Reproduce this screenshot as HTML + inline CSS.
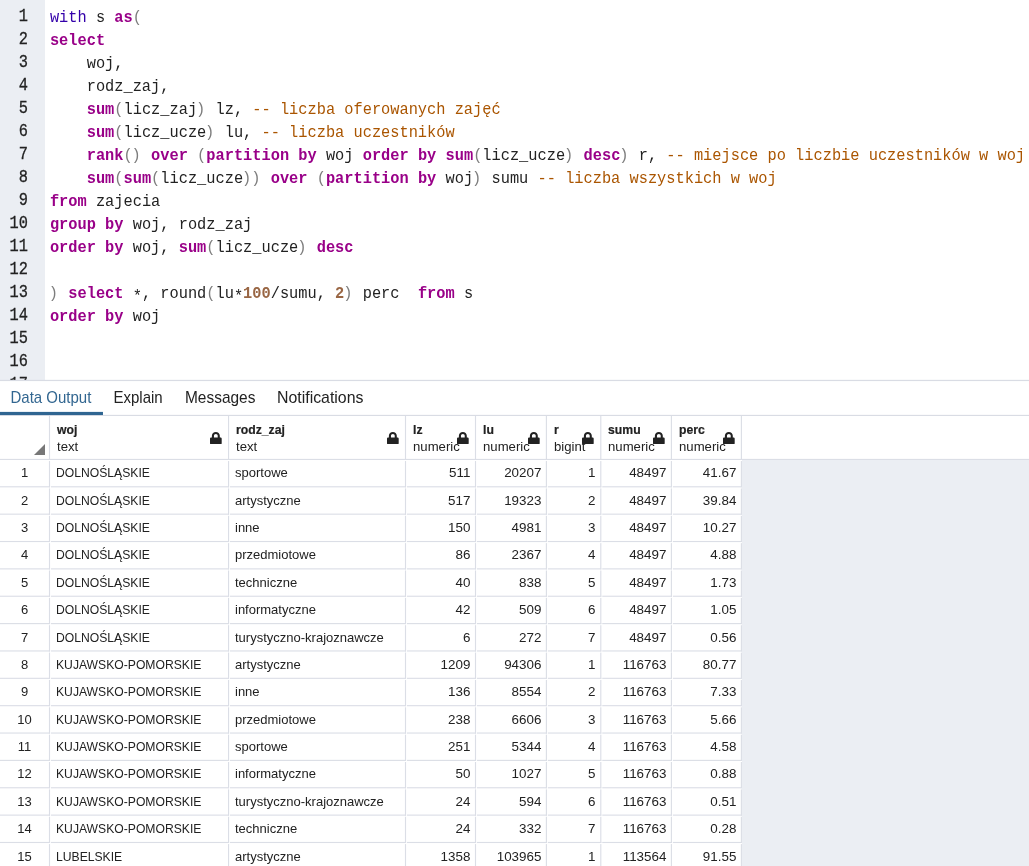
<!DOCTYPE html>
<html lang="en"><head><meta charset="utf-8"><title>pgAdmin query</title>
<style>
html,body{margin:0;padding:0;}
body{width:1029px;height:866px;overflow:hidden;background:#fff;position:relative;font-family:"Liberation Sans",sans-serif;color:#222;}
#ed{position:absolute;left:0;top:0;width:1029px;height:380px;overflow:hidden;background:#fff;}
#gut{position:absolute;left:0;top:0;width:45px;height:380px;background:#ebeef3;}
.ln{position:absolute;left:0;width:28px;text-align:right;font-family:"Liberation Mono",monospace;font-size:15.33px;line-height:23px;height:23px;color:#222;white-space:pre;transform:scaleY(1.2);transform-origin:0 15.590px;-webkit-text-stroke:0.250px #222;}
.cl{position:absolute;left:49.900px;font-family:"Liberation Mono",monospace;font-size:15.33px;line-height:23px;height:23px;color:#222;white-space:pre;transform:scaleY(1.035);transform-origin:0 15.590px;}
.k{color:#990088;font-weight:bold;}
.b{color:#3300aa;}
.p{color:#7d7d7d;}
.c{color:#aa5500;}
.n{color:#996644;font-weight:bold;}
#pl{position:absolute;left:0;top:378px;}
#tabs{position:absolute;left:0;top:381px;width:1029px;height:34px;background:#fff;}
.tab{position:absolute;top:0.400px;height:34px;line-height:34px;font-size:15px;color:#222;white-space:pre;transform-origin:0 21.950px;}
#grid{position:absolute;left:0;top:416px;width:1029px;height:450px;background:#fff;overflow:hidden;}
#gbg{position:absolute;left:742px;top:44px;width:300px;height:420px;background:#ebeef3;}
#lines{position:absolute;left:0;top:0;fill:#dbdee6;}
.hn{position:absolute;font-weight:bold;font-size:13px;line-height:16px;white-space:pre;color:#222;transform:scale(0.94,1.05);transform-origin:0 12.300px;-webkit-text-stroke:0.200px #222;}
.ht{position:absolute;font-size:13px;line-height:16px;white-space:pre;color:#222;transform:scale(1.012,1.04);transform-origin:0 12.300px;}
.lock{position:absolute;width:11.700px;height:12.450px;fill:#222;}
.a{position:relative;top:3px;}
.q{position:relative;left:-1.200px;}
.cell{position:absolute;font-size:13px;line-height:27.430px;height:27.430px;white-space:pre;color:#222;}
.r{text-align:right;transform:scaleX(1.03);transform-origin:100% 0;}
.u{transform:scaleX(0.935);transform-origin:0 0;}
#tri{position:absolute;left:34px;top:28px;width:0;height:0;border-left:11px solid transparent;border-bottom:11px solid #777;}
#w{position:absolute;left:0;top:0;width:1029px;height:866px;overflow:hidden;will-change:transform;background:#fff;}
</style></head><body><div id="w">
<div id="ed"><div id="gut"></div>
<div class="ln" style="top:5.7px">1</div><div class="cl" style="top:7.3px"><span class="b">with</span> s <span class="k">as</span><span class="p">(</span></div>
<div class="ln" style="top:28.7px">2</div><div class="cl" style="top:30.3px"><span class="k">select</span></div>
<div class="ln" style="top:51.7px">3</div><div class="cl" style="top:53.3px">    woj,</div>
<div class="ln" style="top:74.7px">4</div><div class="cl" style="top:76.3px">    rodz_zaj,</div>
<div class="ln" style="top:97.7px">5</div><div class="cl" style="top:99.3px">    <span class="k">sum</span><span class="p">(</span>licz_zaj<span class="p"><span class="q">)</span></span> lz, <span class="c">-- liczba oferowanych zajęć</span></div>
<div class="ln" style="top:120.7px">6</div><div class="cl" style="top:122.3px">    <span class="k">sum</span><span class="p">(</span>licz_ucze<span class="p"><span class="q">)</span></span> lu, <span class="c">-- liczba uczestników</span></div>
<div class="ln" style="top:143.7px">7</div><div class="cl" style="top:145.3px">    <span class="k">rank</span><span class="p">(<span class="q">)</span></span> <span class="k">over</span> <span class="p">(</span><span class="k">partition</span> <span class="k">by</span> woj <span class="k">order</span> <span class="k">by</span> <span class="k">sum</span><span class="p">(</span>licz_ucze<span class="p"><span class="q">)</span></span> <span class="k">desc</span><span class="p"><span class="q">)</span></span> r, <span class="c">-- miejsce po liczbie uczestników w woj</span></div>
<div class="ln" style="top:166.7px">8</div><div class="cl" style="top:168.3px">    <span class="k">sum</span><span class="p">(</span><span class="k">sum</span><span class="p">(</span>licz_ucze<span class="p"><span class="q">)</span><span class="q">)</span></span> <span class="k">over</span> <span class="p">(</span><span class="k">partition</span> <span class="k">by</span> woj<span class="p"><span class="q">)</span></span> sumu <span class="c">-- liczba wszystkich w woj</span></div>
<div class="ln" style="top:189.7px">9</div><div class="cl" style="top:191.3px"><span class="k">from</span> zajecia</div>
<div class="ln" style="top:212.7px">10</div><div class="cl" style="top:214.3px"><span class="k">group</span> <span class="k">by</span> woj, rodz_zaj</div>
<div class="ln" style="top:235.7px">11</div><div class="cl" style="top:237.3px"><span class="k">order</span> <span class="k">by</span> woj, <span class="k">sum</span><span class="p">(</span>licz_ucze<span class="p"><span class="q">)</span></span> <span class="k">desc</span></div>
<div class="ln" style="top:258.7px">12</div><div class="cl" style="top:260.3px"></div>
<div class="ln" style="top:281.7px">13</div><div class="cl" style="top:283.3px"><span class="p"><span class="q">)</span></span> <span class="k">select</span> <span class="a">*</span>, round<span class="p">(</span>lu<span class="a">*</span><span class="n">100</span>/sumu, <span class="n">2</span><span class="p"><span class="q">)</span></span> perc  <span class="k">from</span> s</div>
<div class="ln" style="top:304.7px">14</div><div class="cl" style="top:306.3px"><span class="k">order</span> <span class="k">by</span> woj</div>
<div class="ln" style="top:327.7px">15</div><div class="cl" style="top:329.3px"></div>
<div class="ln" style="top:350.7px">16</div><div class="cl" style="top:352.3px"></div>
<div class="ln" style="top:373.7px">17</div><div class="cl" style="top:375.3px"></div>
</div>
<div id="tabs"><div class="tab" style="left:10.5px;color:#326690;transform:scale(1.0,1.06)">Data Output</div><div class="tab" style="left:113.5px;color:#222;transform:scale(1.0,1.06)">Explain</div><div class="tab" style="left:184.5px;color:#222;transform:scale(1.03,1.06)">Messages</div><div class="tab" style="left:276.5px;color:#222;transform:scale(1.058,1.06)">Notifications</div></div>
<svg id="pl" width="1029" height="40" viewBox="0 378 1029 40"><rect x="0" y="379.84" width="1029" height="1.24" fill="#d9dce4"/><rect x="0" y="414.85" width="1029" height="1.24" fill="#d9dce4"/><rect x="0" y="411.9" width="102.97" height="3.14" fill="#2f6591"/></svg>
<div id="grid"><div id="gbg"></div><div id="tri"></div>
<div class="hn" style="left:56.7px;top:6.200px">woj</div><div class="ht" style="left:56.6px;top:23.100px">text</div><svg class="lock" style="left:210.3px;top:15.650px" viewBox="0 0 448 512" preserveAspectRatio="none"><path d="M400 224h-24v-72C376 68.200 307.800 0 224 0S72 68.200 72 152v72H48c-26.500 0-48 21.500-48 48v192c0 26.500 21.500 48 48 48h352c26.500 0 48-21.500 48-48V272c0-26.500-21.500-48-48-48zm-104 0H152v-72c0-39.700 32.300-72 72-72s72 32.300 72 72v72z"/></svg>
<div class="hn" style="left:235.7px;top:6.200px">rodz_zaj</div><div class="ht" style="left:235.6px;top:23.100px">text</div><svg class="lock" style="left:387.3px;top:15.650px" viewBox="0 0 448 512" preserveAspectRatio="none"><path d="M400 224h-24v-72C376 68.200 307.800 0 224 0S72 68.200 72 152v72H48c-26.500 0-48 21.500-48 48v192c0 26.500 21.500 48 48 48h352c26.500 0 48-21.500 48-48V272c0-26.500-21.500-48-48-48zm-104 0H152v-72c0-39.700 32.300-72 72-72s72 32.300 72 72v72z"/></svg>
<div class="hn" style="left:412.7px;top:6.200px">lz</div><div class="ht" style="left:412.6px;top:23.100px">numeric</div><svg class="lock" style="left:457.3px;top:15.650px" viewBox="0 0 448 512" preserveAspectRatio="none"><path d="M400 224h-24v-72C376 68.200 307.800 0 224 0S72 68.200 72 152v72H48c-26.500 0-48 21.500-48 48v192c0 26.500 21.500 48 48 48h352c26.500 0 48-21.500 48-48V272c0-26.500-21.500-48-48-48zm-104 0H152v-72c0-39.700 32.300-72 72-72s72 32.300 72 72v72z"/></svg>
<div class="hn" style="left:482.7px;top:6.200px">lu</div><div class="ht" style="left:482.6px;top:23.100px">numeric</div><svg class="lock" style="left:528.3px;top:15.650px" viewBox="0 0 448 512" preserveAspectRatio="none"><path d="M400 224h-24v-72C376 68.200 307.800 0 224 0S72 68.200 72 152v72H48c-26.500 0-48 21.500-48 48v192c0 26.500 21.500 48 48 48h352c26.500 0 48-21.500 48-48V272c0-26.500-21.500-48-48-48zm-104 0H152v-72c0-39.700 32.300-72 72-72s72 32.300 72 72v72z"/></svg>
<div class="hn" style="left:553.7px;top:6.200px">r</div><div class="ht" style="left:553.6px;top:23.100px">bigint</div><svg class="lock" style="left:582.3px;top:15.650px" viewBox="0 0 448 512" preserveAspectRatio="none"><path d="M400 224h-24v-72C376 68.200 307.800 0 224 0S72 68.200 72 152v72H48c-26.500 0-48 21.500-48 48v192c0 26.500 21.500 48 48 48h352c26.500 0 48-21.500 48-48V272c0-26.500-21.500-48-48-48zm-104 0H152v-72c0-39.700 32.300-72 72-72s72 32.300 72 72v72z"/></svg>
<div class="hn" style="left:607.7px;top:6.200px">sumu</div><div class="ht" style="left:607.6px;top:23.100px">numeric</div><svg class="lock" style="left:653.3px;top:15.650px" viewBox="0 0 448 512" preserveAspectRatio="none"><path d="M400 224h-24v-72C376 68.200 307.800 0 224 0S72 68.200 72 152v72H48c-26.500 0-48 21.500-48 48v192c0 26.500 21.500 48 48 48h352c26.500 0 48-21.500 48-48V272c0-26.500-21.500-48-48-48zm-104 0H152v-72c0-39.700 32.300-72 72-72s72 32.300 72 72v72z"/></svg>
<div class="hn" style="left:678.7px;top:6.200px">perc</div><div class="ht" style="left:678.6px;top:23.100px">numeric</div><svg class="lock" style="left:723.3px;top:15.650px" viewBox="0 0 448 512" preserveAspectRatio="none"><path d="M400 224h-24v-72C376 68.200 307.800 0 224 0S72 68.200 72 152v72H48c-26.500 0-48 21.500-48 48v192c0 26.500 21.500 48 48 48h352c26.500 0 48-21.500 48-48V272c0-26.500-21.500-48-48-48zm-104 0H152v-72c0-39.700 32.300-72 72-72s72 32.300 72 72v72z"/></svg>
<svg id="lines" width="1029" height="450" viewBox="0 0 1029 450"><rect x="48.94" y="0" width="1.12" height="44.00"/><rect x="227.99" y="0" width="1.12" height="44.00"/><rect x="404.94" y="0" width="1.12" height="44.00"/><rect x="474.94" y="0" width="1.12" height="44.00"/><rect x="545.84" y="0" width="1.12" height="44.00"/><rect x="600.24" y="0" width="1.12" height="44.00"/><rect x="670.84" y="0" width="1.12" height="44.00"/><rect x="740.84" y="0" width="1.12" height="44.00"/><rect x="0" y="42.88" width="1029" height="1.12"/><rect x="0.00" y="70.24" width="50.06" height="1.12"/><rect x="50.95" y="70.24" width="178.16" height="1.12"/><rect x="230.00" y="70.24" width="176.06" height="1.12"/><rect x="406.95" y="70.24" width="69.11" height="1.12"/><rect x="476.95" y="70.24" width="70.01" height="1.12"/><rect x="547.85" y="70.24" width="53.51" height="1.12"/><rect x="602.25" y="70.24" width="69.71" height="1.12"/><rect x="672.85" y="70.24" width="69.11" height="1.12"/><rect x="0.00" y="97.60" width="50.06" height="1.12"/><rect x="50.95" y="97.60" width="178.16" height="1.12"/><rect x="230.00" y="97.60" width="176.06" height="1.12"/><rect x="406.95" y="97.60" width="69.11" height="1.12"/><rect x="476.95" y="97.60" width="70.01" height="1.12"/><rect x="547.85" y="97.60" width="53.51" height="1.12"/><rect x="602.25" y="97.60" width="69.71" height="1.12"/><rect x="672.85" y="97.60" width="69.11" height="1.12"/><rect x="0.00" y="124.96" width="50.06" height="1.12"/><rect x="50.95" y="124.96" width="178.16" height="1.12"/><rect x="230.00" y="124.96" width="176.06" height="1.12"/><rect x="406.95" y="124.96" width="69.11" height="1.12"/><rect x="476.95" y="124.96" width="70.01" height="1.12"/><rect x="547.85" y="124.96" width="53.51" height="1.12"/><rect x="602.25" y="124.96" width="69.71" height="1.12"/><rect x="672.85" y="124.96" width="69.11" height="1.12"/><rect x="0.00" y="152.32" width="50.06" height="1.12"/><rect x="50.95" y="152.32" width="178.16" height="1.12"/><rect x="230.00" y="152.32" width="176.06" height="1.12"/><rect x="406.95" y="152.32" width="69.11" height="1.12"/><rect x="476.95" y="152.32" width="70.01" height="1.12"/><rect x="547.85" y="152.32" width="53.51" height="1.12"/><rect x="602.25" y="152.32" width="69.71" height="1.12"/><rect x="672.85" y="152.32" width="69.11" height="1.12"/><rect x="0.00" y="179.68" width="50.06" height="1.12"/><rect x="50.95" y="179.68" width="178.16" height="1.12"/><rect x="230.00" y="179.68" width="176.06" height="1.12"/><rect x="406.95" y="179.68" width="69.11" height="1.12"/><rect x="476.95" y="179.68" width="70.01" height="1.12"/><rect x="547.85" y="179.68" width="53.51" height="1.12"/><rect x="602.25" y="179.68" width="69.71" height="1.12"/><rect x="672.85" y="179.68" width="69.11" height="1.12"/><rect x="0.00" y="207.04" width="50.06" height="1.12"/><rect x="50.95" y="207.04" width="178.16" height="1.12"/><rect x="230.00" y="207.04" width="176.06" height="1.12"/><rect x="406.95" y="207.04" width="69.11" height="1.12"/><rect x="476.95" y="207.04" width="70.01" height="1.12"/><rect x="547.85" y="207.04" width="53.51" height="1.12"/><rect x="602.25" y="207.04" width="69.71" height="1.12"/><rect x="672.85" y="207.04" width="69.11" height="1.12"/><rect x="0.00" y="234.40" width="50.06" height="1.12"/><rect x="50.95" y="234.40" width="178.16" height="1.12"/><rect x="230.00" y="234.40" width="176.06" height="1.12"/><rect x="406.95" y="234.40" width="69.11" height="1.12"/><rect x="476.95" y="234.40" width="70.01" height="1.12"/><rect x="547.85" y="234.40" width="53.51" height="1.12"/><rect x="602.25" y="234.40" width="69.71" height="1.12"/><rect x="672.85" y="234.40" width="69.11" height="1.12"/><rect x="0.00" y="261.76" width="50.06" height="1.12"/><rect x="50.95" y="261.76" width="178.16" height="1.12"/><rect x="230.00" y="261.76" width="176.06" height="1.12"/><rect x="406.95" y="261.76" width="69.11" height="1.12"/><rect x="476.95" y="261.76" width="70.01" height="1.12"/><rect x="547.85" y="261.76" width="53.51" height="1.12"/><rect x="602.25" y="261.76" width="69.71" height="1.12"/><rect x="672.85" y="261.76" width="69.11" height="1.12"/><rect x="0.00" y="289.12" width="50.06" height="1.12"/><rect x="50.95" y="289.12" width="178.16" height="1.12"/><rect x="230.00" y="289.12" width="176.06" height="1.12"/><rect x="406.95" y="289.12" width="69.11" height="1.12"/><rect x="476.95" y="289.12" width="70.01" height="1.12"/><rect x="547.85" y="289.12" width="53.51" height="1.12"/><rect x="602.25" y="289.12" width="69.71" height="1.12"/><rect x="672.85" y="289.12" width="69.11" height="1.12"/><rect x="0.00" y="316.48" width="50.06" height="1.12"/><rect x="50.95" y="316.48" width="178.16" height="1.12"/><rect x="230.00" y="316.48" width="176.06" height="1.12"/><rect x="406.95" y="316.48" width="69.11" height="1.12"/><rect x="476.95" y="316.48" width="70.01" height="1.12"/><rect x="547.85" y="316.48" width="53.51" height="1.12"/><rect x="602.25" y="316.48" width="69.71" height="1.12"/><rect x="672.85" y="316.48" width="69.11" height="1.12"/><rect x="0.00" y="343.84" width="50.06" height="1.12"/><rect x="50.95" y="343.84" width="178.16" height="1.12"/><rect x="230.00" y="343.84" width="176.06" height="1.12"/><rect x="406.95" y="343.84" width="69.11" height="1.12"/><rect x="476.95" y="343.84" width="70.01" height="1.12"/><rect x="547.85" y="343.84" width="53.51" height="1.12"/><rect x="602.25" y="343.84" width="69.71" height="1.12"/><rect x="672.85" y="343.84" width="69.11" height="1.12"/><rect x="0.00" y="371.20" width="50.06" height="1.12"/><rect x="50.95" y="371.20" width="178.16" height="1.12"/><rect x="230.00" y="371.20" width="176.06" height="1.12"/><rect x="406.95" y="371.20" width="69.11" height="1.12"/><rect x="476.95" y="371.20" width="70.01" height="1.12"/><rect x="547.85" y="371.20" width="53.51" height="1.12"/><rect x="602.25" y="371.20" width="69.71" height="1.12"/><rect x="672.85" y="371.20" width="69.11" height="1.12"/><rect x="0.00" y="398.56" width="50.06" height="1.12"/><rect x="50.95" y="398.56" width="178.16" height="1.12"/><rect x="230.00" y="398.56" width="176.06" height="1.12"/><rect x="406.95" y="398.56" width="69.11" height="1.12"/><rect x="476.95" y="398.56" width="70.01" height="1.12"/><rect x="547.85" y="398.56" width="53.51" height="1.12"/><rect x="602.25" y="398.56" width="69.71" height="1.12"/><rect x="672.85" y="398.56" width="69.11" height="1.12"/><rect x="0.00" y="425.92" width="50.06" height="1.12"/><rect x="50.95" y="425.92" width="178.16" height="1.12"/><rect x="230.00" y="425.92" width="176.06" height="1.12"/><rect x="406.95" y="425.92" width="69.11" height="1.12"/><rect x="476.95" y="425.92" width="70.01" height="1.12"/><rect x="547.85" y="425.92" width="53.51" height="1.12"/><rect x="602.25" y="425.92" width="69.71" height="1.12"/><rect x="672.85" y="425.92" width="69.11" height="1.12"/><rect x="0.00" y="453.28" width="50.06" height="1.12"/><rect x="50.95" y="453.28" width="178.16" height="1.12"/><rect x="230.00" y="453.28" width="176.06" height="1.12"/><rect x="406.95" y="453.28" width="69.11" height="1.12"/><rect x="476.95" y="453.28" width="70.01" height="1.12"/><rect x="547.85" y="453.28" width="53.51" height="1.12"/><rect x="602.25" y="453.28" width="69.71" height="1.12"/><rect x="672.85" y="453.28" width="69.11" height="1.12"/><rect x="48.94" y="45.04" width="1.12" height="26.32"/><rect x="227.99" y="45.04" width="1.12" height="26.32"/><rect x="404.94" y="45.04" width="1.12" height="26.32"/><rect x="474.94" y="45.04" width="1.12" height="26.32"/><rect x="545.84" y="45.04" width="1.12" height="26.32"/><rect x="600.24" y="45.04" width="1.12" height="26.32"/><rect x="670.84" y="45.04" width="1.12" height="26.32"/><rect x="740.84" y="45.04" width="1.12" height="26.32"/><rect x="48.94" y="72.40" width="1.12" height="26.32"/><rect x="227.99" y="72.40" width="1.12" height="26.32"/><rect x="404.94" y="72.40" width="1.12" height="26.32"/><rect x="474.94" y="72.40" width="1.12" height="26.32"/><rect x="545.84" y="72.40" width="1.12" height="26.32"/><rect x="600.24" y="72.40" width="1.12" height="26.32"/><rect x="670.84" y="72.40" width="1.12" height="26.32"/><rect x="740.84" y="72.40" width="1.12" height="26.32"/><rect x="48.94" y="99.76" width="1.12" height="26.32"/><rect x="227.99" y="99.76" width="1.12" height="26.32"/><rect x="404.94" y="99.76" width="1.12" height="26.32"/><rect x="474.94" y="99.76" width="1.12" height="26.32"/><rect x="545.84" y="99.76" width="1.12" height="26.32"/><rect x="600.24" y="99.76" width="1.12" height="26.32"/><rect x="670.84" y="99.76" width="1.12" height="26.32"/><rect x="740.84" y="99.76" width="1.12" height="26.32"/><rect x="48.94" y="127.12" width="1.12" height="26.32"/><rect x="227.99" y="127.12" width="1.12" height="26.32"/><rect x="404.94" y="127.12" width="1.12" height="26.32"/><rect x="474.94" y="127.12" width="1.12" height="26.32"/><rect x="545.84" y="127.12" width="1.12" height="26.32"/><rect x="600.24" y="127.12" width="1.12" height="26.32"/><rect x="670.84" y="127.12" width="1.12" height="26.32"/><rect x="740.84" y="127.12" width="1.12" height="26.32"/><rect x="48.94" y="154.48" width="1.12" height="26.32"/><rect x="227.99" y="154.48" width="1.12" height="26.32"/><rect x="404.94" y="154.48" width="1.12" height="26.32"/><rect x="474.94" y="154.48" width="1.12" height="26.32"/><rect x="545.84" y="154.48" width="1.12" height="26.32"/><rect x="600.24" y="154.48" width="1.12" height="26.32"/><rect x="670.84" y="154.48" width="1.12" height="26.32"/><rect x="740.84" y="154.48" width="1.12" height="26.32"/><rect x="48.94" y="181.84" width="1.12" height="26.32"/><rect x="227.99" y="181.84" width="1.12" height="26.32"/><rect x="404.94" y="181.84" width="1.12" height="26.32"/><rect x="474.94" y="181.84" width="1.12" height="26.32"/><rect x="545.84" y="181.84" width="1.12" height="26.32"/><rect x="600.24" y="181.84" width="1.12" height="26.32"/><rect x="670.84" y="181.84" width="1.12" height="26.32"/><rect x="740.84" y="181.84" width="1.12" height="26.32"/><rect x="48.94" y="209.20" width="1.12" height="26.32"/><rect x="227.99" y="209.20" width="1.12" height="26.32"/><rect x="404.94" y="209.20" width="1.12" height="26.32"/><rect x="474.94" y="209.20" width="1.12" height="26.32"/><rect x="545.84" y="209.20" width="1.12" height="26.32"/><rect x="600.24" y="209.20" width="1.12" height="26.32"/><rect x="670.84" y="209.20" width="1.12" height="26.32"/><rect x="740.84" y="209.20" width="1.12" height="26.32"/><rect x="48.94" y="236.56" width="1.12" height="26.32"/><rect x="227.99" y="236.56" width="1.12" height="26.32"/><rect x="404.94" y="236.56" width="1.12" height="26.32"/><rect x="474.94" y="236.56" width="1.12" height="26.32"/><rect x="545.84" y="236.56" width="1.12" height="26.32"/><rect x="600.24" y="236.56" width="1.12" height="26.32"/><rect x="670.84" y="236.56" width="1.12" height="26.32"/><rect x="740.84" y="236.56" width="1.12" height="26.32"/><rect x="48.94" y="263.92" width="1.12" height="26.32"/><rect x="227.99" y="263.92" width="1.12" height="26.32"/><rect x="404.94" y="263.92" width="1.12" height="26.32"/><rect x="474.94" y="263.92" width="1.12" height="26.32"/><rect x="545.84" y="263.92" width="1.12" height="26.32"/><rect x="600.24" y="263.92" width="1.12" height="26.32"/><rect x="670.84" y="263.92" width="1.12" height="26.32"/><rect x="740.84" y="263.92" width="1.12" height="26.32"/><rect x="48.94" y="291.28" width="1.12" height="26.32"/><rect x="227.99" y="291.28" width="1.12" height="26.32"/><rect x="404.94" y="291.28" width="1.12" height="26.32"/><rect x="474.94" y="291.28" width="1.12" height="26.32"/><rect x="545.84" y="291.28" width="1.12" height="26.32"/><rect x="600.24" y="291.28" width="1.12" height="26.32"/><rect x="670.84" y="291.28" width="1.12" height="26.32"/><rect x="740.84" y="291.28" width="1.12" height="26.32"/><rect x="48.94" y="318.64" width="1.12" height="26.32"/><rect x="227.99" y="318.64" width="1.12" height="26.32"/><rect x="404.94" y="318.64" width="1.12" height="26.32"/><rect x="474.94" y="318.64" width="1.12" height="26.32"/><rect x="545.84" y="318.64" width="1.12" height="26.32"/><rect x="600.24" y="318.64" width="1.12" height="26.32"/><rect x="670.84" y="318.64" width="1.12" height="26.32"/><rect x="740.84" y="318.64" width="1.12" height="26.32"/><rect x="48.94" y="346.00" width="1.12" height="26.32"/><rect x="227.99" y="346.00" width="1.12" height="26.32"/><rect x="404.94" y="346.00" width="1.12" height="26.32"/><rect x="474.94" y="346.00" width="1.12" height="26.32"/><rect x="545.84" y="346.00" width="1.12" height="26.32"/><rect x="600.24" y="346.00" width="1.12" height="26.32"/><rect x="670.84" y="346.00" width="1.12" height="26.32"/><rect x="740.84" y="346.00" width="1.12" height="26.32"/><rect x="48.94" y="373.36" width="1.12" height="26.32"/><rect x="227.99" y="373.36" width="1.12" height="26.32"/><rect x="404.94" y="373.36" width="1.12" height="26.32"/><rect x="474.94" y="373.36" width="1.12" height="26.32"/><rect x="545.84" y="373.36" width="1.12" height="26.32"/><rect x="600.24" y="373.36" width="1.12" height="26.32"/><rect x="670.84" y="373.36" width="1.12" height="26.32"/><rect x="740.84" y="373.36" width="1.12" height="26.32"/><rect x="48.94" y="400.72" width="1.12" height="26.32"/><rect x="227.99" y="400.72" width="1.12" height="26.32"/><rect x="404.94" y="400.72" width="1.12" height="26.32"/><rect x="474.94" y="400.72" width="1.12" height="26.32"/><rect x="545.84" y="400.72" width="1.12" height="26.32"/><rect x="600.24" y="400.72" width="1.12" height="26.32"/><rect x="670.84" y="400.72" width="1.12" height="26.32"/><rect x="740.84" y="400.72" width="1.12" height="26.32"/><rect x="48.94" y="428.08" width="1.12" height="26.32"/><rect x="227.99" y="428.08" width="1.12" height="26.32"/><rect x="404.94" y="428.08" width="1.12" height="26.32"/><rect x="474.94" y="428.08" width="1.12" height="26.32"/><rect x="545.84" y="428.08" width="1.12" height="26.32"/><rect x="600.24" y="428.08" width="1.12" height="26.32"/><rect x="670.84" y="428.08" width="1.12" height="26.32"/><rect x="740.84" y="428.08" width="1.12" height="26.32"/></svg>
<div class="cell" style="left:0;width:49px;text-align:center;top:43.00px">1</div><div class="cell u" style="left:56px;top:43.00px">DOLNOŚLĄSKIE</div><div class="cell" style="left:235px;top:43.00px">sportowe</div><div class="cell r" style="left:405px;width:65.4px;top:43.00px">511</div><div class="cell r" style="left:475px;width:66.4px;top:43.00px">20207</div><div class="cell r" style="left:546px;width:49.4px;top:43.00px">1</div><div class="cell r" style="left:600px;width:66.4px;top:43.00px">48497</div><div class="cell r" style="left:671px;width:65.4px;top:43.00px">41.67</div>
<div class="cell" style="left:0;width:49px;text-align:center;top:71.03px">2</div><div class="cell u" style="left:56px;top:71.03px">DOLNOŚLĄSKIE</div><div class="cell" style="left:235px;top:71.03px">artystyczne</div><div class="cell r" style="left:405px;width:65.4px;top:71.03px">517</div><div class="cell r" style="left:475px;width:66.4px;top:71.03px">19323</div><div class="cell r" style="left:546px;width:49.4px;top:71.03px">2</div><div class="cell r" style="left:600px;width:66.4px;top:71.03px">48497</div><div class="cell r" style="left:671px;width:65.4px;top:71.03px">39.84</div>
<div class="cell" style="left:0;width:49px;text-align:center;top:97.86px">3</div><div class="cell u" style="left:56px;top:97.86px">DOLNOŚLĄSKIE</div><div class="cell" style="left:235px;top:97.86px">inne</div><div class="cell r" style="left:405px;width:65.4px;top:97.86px">150</div><div class="cell r" style="left:475px;width:66.4px;top:97.86px">4981</div><div class="cell r" style="left:546px;width:49.4px;top:97.86px">3</div><div class="cell r" style="left:600px;width:66.4px;top:97.86px">48497</div><div class="cell r" style="left:671px;width:65.4px;top:97.86px">10.27</div>
<div class="cell" style="left:0;width:49px;text-align:center;top:125.29px">4</div><div class="cell u" style="left:56px;top:125.29px">DOLNOŚLĄSKIE</div><div class="cell" style="left:235px;top:125.29px">przedmiotowe</div><div class="cell r" style="left:405px;width:65.4px;top:125.29px">86</div><div class="cell r" style="left:475px;width:66.4px;top:125.29px">2367</div><div class="cell r" style="left:546px;width:49.4px;top:125.29px">4</div><div class="cell r" style="left:600px;width:66.4px;top:125.29px">48497</div><div class="cell r" style="left:671px;width:65.4px;top:125.29px">4.88</div>
<div class="cell" style="left:0;width:49px;text-align:center;top:152.72px">5</div><div class="cell u" style="left:56px;top:152.72px">DOLNOŚLĄSKIE</div><div class="cell" style="left:235px;top:152.72px">techniczne</div><div class="cell r" style="left:405px;width:65.4px;top:152.72px">40</div><div class="cell r" style="left:475px;width:66.4px;top:152.72px">838</div><div class="cell r" style="left:546px;width:49.4px;top:152.72px">5</div><div class="cell r" style="left:600px;width:66.4px;top:152.72px">48497</div><div class="cell r" style="left:671px;width:65.4px;top:152.72px">1.73</div>
<div class="cell" style="left:0;width:49px;text-align:center;top:180.15px">6</div><div class="cell u" style="left:56px;top:180.15px">DOLNOŚLĄSKIE</div><div class="cell" style="left:235px;top:180.15px">informatyczne</div><div class="cell r" style="left:405px;width:65.4px;top:180.15px">42</div><div class="cell r" style="left:475px;width:66.4px;top:180.15px">509</div><div class="cell r" style="left:546px;width:49.4px;top:180.15px">6</div><div class="cell r" style="left:600px;width:66.4px;top:180.15px">48497</div><div class="cell r" style="left:671px;width:65.4px;top:180.15px">1.05</div>
<div class="cell" style="left:0;width:49px;text-align:center;top:207.58px">7</div><div class="cell u" style="left:56px;top:207.58px">DOLNOŚLĄSKIE</div><div class="cell" style="left:235px;top:207.58px">turystyczno-krajoznawcze</div><div class="cell r" style="left:405px;width:65.4px;top:207.58px">6</div><div class="cell r" style="left:475px;width:66.4px;top:207.58px">272</div><div class="cell r" style="left:546px;width:49.4px;top:207.58px">7</div><div class="cell r" style="left:600px;width:66.4px;top:207.58px">48497</div><div class="cell r" style="left:671px;width:65.4px;top:207.58px">0.56</div>
<div class="cell" style="left:0;width:49px;text-align:center;top:235.01px">8</div><div class="cell u" style="left:56px;top:235.01px">KUJAWSKO-POMORSKIE</div><div class="cell" style="left:235px;top:235.01px">artystyczne</div><div class="cell r" style="left:405px;width:65.4px;top:235.01px">1209</div><div class="cell r" style="left:475px;width:66.4px;top:235.01px">94306</div><div class="cell r" style="left:546px;width:49.4px;top:235.01px">1</div><div class="cell r" style="left:600px;width:66.4px;top:235.01px">116763</div><div class="cell r" style="left:671px;width:65.4px;top:235.01px">80.77</div>
<div class="cell" style="left:0;width:49px;text-align:center;top:262.44px">9</div><div class="cell u" style="left:56px;top:262.44px">KUJAWSKO-POMORSKIE</div><div class="cell" style="left:235px;top:262.44px">inne</div><div class="cell r" style="left:405px;width:65.4px;top:262.44px">136</div><div class="cell r" style="left:475px;width:66.4px;top:262.44px">8554</div><div class="cell r" style="left:546px;width:49.4px;top:262.44px">2</div><div class="cell r" style="left:600px;width:66.4px;top:262.44px">116763</div><div class="cell r" style="left:671px;width:65.4px;top:262.44px">7.33</div>
<div class="cell" style="left:0;width:49px;text-align:center;top:289.87px">10</div><div class="cell u" style="left:56px;top:289.87px">KUJAWSKO-POMORSKIE</div><div class="cell" style="left:235px;top:289.87px">przedmiotowe</div><div class="cell r" style="left:405px;width:65.4px;top:289.87px">238</div><div class="cell r" style="left:475px;width:66.4px;top:289.87px">6606</div><div class="cell r" style="left:546px;width:49.4px;top:289.87px">3</div><div class="cell r" style="left:600px;width:66.4px;top:289.87px">116763</div><div class="cell r" style="left:671px;width:65.4px;top:289.87px">5.66</div>
<div class="cell" style="left:0;width:49px;text-align:center;top:317.30px">11</div><div class="cell u" style="left:56px;top:317.30px">KUJAWSKO-POMORSKIE</div><div class="cell" style="left:235px;top:317.30px">sportowe</div><div class="cell r" style="left:405px;width:65.4px;top:317.30px">251</div><div class="cell r" style="left:475px;width:66.4px;top:317.30px">5344</div><div class="cell r" style="left:546px;width:49.4px;top:317.30px">4</div><div class="cell r" style="left:600px;width:66.4px;top:317.30px">116763</div><div class="cell r" style="left:671px;width:65.4px;top:317.30px">4.58</div>
<div class="cell" style="left:0;width:49px;text-align:center;top:343.93px">12</div><div class="cell u" style="left:56px;top:343.93px">KUJAWSKO-POMORSKIE</div><div class="cell" style="left:235px;top:343.93px">informatyczne</div><div class="cell r" style="left:405px;width:65.4px;top:343.93px">50</div><div class="cell r" style="left:475px;width:66.4px;top:343.93px">1027</div><div class="cell r" style="left:546px;width:49.4px;top:343.93px">5</div><div class="cell r" style="left:600px;width:66.4px;top:343.93px">116763</div><div class="cell r" style="left:671px;width:65.4px;top:343.93px">0.88</div>
<div class="cell" style="left:0;width:49px;text-align:center;top:372.16px">13</div><div class="cell u" style="left:56px;top:372.16px">KUJAWSKO-POMORSKIE</div><div class="cell" style="left:235px;top:372.16px">turystyczno-krajoznawcze</div><div class="cell r" style="left:405px;width:65.4px;top:372.16px">24</div><div class="cell r" style="left:475px;width:66.4px;top:372.16px">594</div><div class="cell r" style="left:546px;width:49.4px;top:372.16px">6</div><div class="cell r" style="left:600px;width:66.4px;top:372.16px">116763</div><div class="cell r" style="left:671px;width:65.4px;top:372.16px">0.51</div>
<div class="cell" style="left:0;width:49px;text-align:center;top:398.79px">14</div><div class="cell u" style="left:56px;top:398.79px">KUJAWSKO-POMORSKIE</div><div class="cell" style="left:235px;top:398.79px">techniczne</div><div class="cell r" style="left:405px;width:65.4px;top:398.79px">24</div><div class="cell r" style="left:475px;width:66.4px;top:398.79px">332</div><div class="cell r" style="left:546px;width:49.4px;top:398.79px">7</div><div class="cell r" style="left:600px;width:66.4px;top:398.79px">116763</div><div class="cell r" style="left:671px;width:65.4px;top:398.79px">0.28</div>
<div class="cell" style="left:0;width:49px;text-align:center;top:427.02px">15</div><div class="cell u" style="left:56px;top:427.02px">LUBELSKIE</div><div class="cell" style="left:235px;top:427.02px">artystyczne</div><div class="cell r" style="left:405px;width:65.4px;top:427.02px">1358</div><div class="cell r" style="left:475px;width:66.4px;top:427.02px">103965</div><div class="cell r" style="left:546px;width:49.4px;top:427.02px">1</div><div class="cell r" style="left:600px;width:66.4px;top:427.02px">113564</div><div class="cell r" style="left:671px;width:65.4px;top:427.02px">91.55</div>
</div>
</div></body></html>
